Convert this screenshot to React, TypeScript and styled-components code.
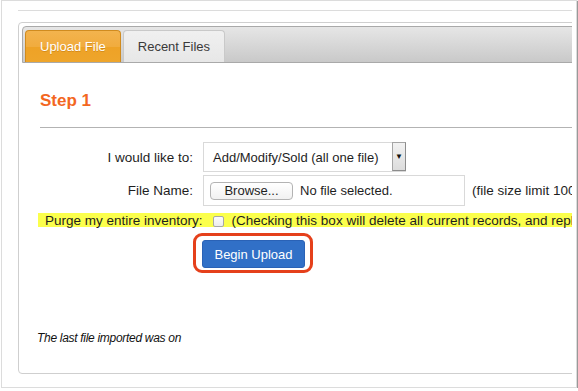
import React from 'react'
import styled, { createGlobalStyle } from 'styled-components'

const GlobalStyle = createGlobalStyle`
  html, body {
    margin: 0;
    padding: 0;
    background: #fff;
  }
  body {
    font-family: "Liberation Sans", Helvetica, Arial, sans-serif;
    color: #1e1e1e;
  }
`

const Frame = styled.div`
  box-sizing: border-box;
  margin-left: 1px;
  width: 576px;
  height: 388px;
  border: 1px solid #dcdcdc;
  box-shadow: 1px 1px 1px rgba(0, 0, 0, 0.4);
  background: #fff;
  padding: 9px 4px 0 16px;
`

const Clip = styled.div`
  height: 100%;
  overflow: hidden;
`

const TopRule = styled.div`
  border-top: 1px solid #dcdcdc;
`

const Panel = styled.div`
  box-sizing: border-box;
  margin-top: 11px;
  width: 760px;
  height: 352px;
  border: 1px solid #cfcfcf;
  border-radius: 4px;
  padding: 3px;
`

const TabBar = styled.div`
  box-sizing: border-box;
  height: 37px;
  display: flex;
  align-items: flex-end;
  gap: 2px;
  padding: 0 2px;
  border: 1px solid #a9a9a9;
  border-radius: 4px 4px 0 0;
  background: linear-gradient(#e6e6e6, #c9c9c9);
`

const Tab = styled.div<{ $active?: boolean }>`
  box-sizing: border-box;
  height: 32px;
  padding: 0 14px;
  display: flex;
  align-items: center;
  font-size: 13px;
  border-radius: 4px 4px 0 0;
  border: 1px solid ${p => (p.$active ? '#d08b1f' : '#c9c9c9')};
  border-bottom: none;
  color: ${p => (p.$active ? '#fff' : '#3a3a3a')};
  background: ${p =>
    p.$active
      ? 'linear-gradient(#f3b34e 0%, #f1ac3e 50%, #eea226 51%, #eea52b 100%)'
      : 'linear-gradient(#f0f0f0, #e7e7e7)'};
  text-shadow: ${p => (p.$active ? '0 1px 0 rgba(160, 90, 0, 0.35)' : 'none')};
`

const Content = styled.div`
  padding: 0 0 0 18px;
`

const Heading = styled.h2`
  margin: 28px 0 0;
  font-size: 17px;
  line-height: 20px;
  font-weight: bold;
  color: #f3671f;
`

const Rule = styled.div`
  margin-top: 16px;
  border-top: 1px solid #b3b3b3;
`

const Row = styled.div<{ $gap?: number }>`
  display: flex;
  align-items: center;
  margin-top: ${p => p.$gap ?? 0}px;
`

const Label = styled.label`
  width: 153px;
  text-align: right;
  font-size: 13.5px;
`

const FieldBox = styled.div<{ $w: number; $h: number }>`
  box-sizing: border-box;
  margin-left: 10px;
  width: ${p => p.$w}px;
  height: ${p => p.$h}px;
  border: 1px solid #d9d9d9;
  display: flex;
  align-items: center;
  font-size: 13px;
`

const SelectText = styled.span`
  flex: 1;
  padding-left: 9px;
`

const Arrow = styled.span`
  box-sizing: border-box;
  align-self: stretch;
  width: 14px;
  margin: -1px -1px 0 0;
  border: 1px solid #a5a5a5;
  border-right-color: #8c8c8c;
  border-bottom-color: #8c8c8c;
  background: linear-gradient(#f2f2f2, #dcdcdc);
  display: flex;
  align-items: center;
  justify-content: center;
  font-size: 8px;
  color: #111;
`

const BrowseButton = styled.span`
  box-sizing: border-box;
  margin-left: 6px;
  width: 83px;
  height: 18px;
  border: 1px solid #b3b3b3;
  border-radius: 4px;
  background: linear-gradient(#ffffff, #f1f1f1);
  display: flex;
  align-items: center;
  justify-content: center;
  font-size: 13px;
`

const FileStatus = styled.span`
  margin-left: 7px;
`

const Note = styled.span`
  margin-left: 7px;
  font-size: 13.5px;
  white-space: nowrap;
`

const Highlight = styled.div`
  margin: 7px 0 0 -2px;
  padding-left: 7px;
  height: 14px;
  display: flex;
  align-items: center;
  background: #fbff4c;
  font-size: 13.5px;
  white-space: nowrap;
`

const Check = styled.input`
  appearance: none;
  box-sizing: border-box;
  width: 11px;
  height: 11px;
  margin: 2px 8px 0 10px;
  border: 1px solid #a8a8a8;
  border-radius: 2px;
  background: linear-gradient(#fcfcfc, #ececec);
`

const ButtonRow = styled.div`
  margin-top: 6px;
  padding-left: 153px;
`

const Annotation = styled.div`
  display: inline-flex;
  border: 3px solid #e5401b;
  border-radius: 9px;
  padding: 4px 5px 2px 6px;
`

const UploadButton = styled.button`
  box-sizing: border-box;
  width: 103px;
  height: 28px;
  border: 1px solid #2a62b6;
  border-radius: 3px;
  background: #3170c7;
  color: #fff;
  font-family: inherit;
  font-size: 13px;
  padding: 0;
`

const LastImport = styled.p`
  margin: 58px 0 0 -3px;
  font-size: 12px;
  line-height: 14px;
  letter-spacing: -0.3px;
  font-style: italic;
  color: #111;
`

const App: React.FC = () => {
  return (
    <>
      <GlobalStyle />
      <Frame>
        <Clip>
          <TopRule />
          <Panel>
            <TabBar>
              <Tab $active>Upload File</Tab>
              <Tab>Recent Files</Tab>
            </TabBar>
            <Content>
              <Heading>Step 1</Heading>
              <Rule />
              <Row $gap={14}>
                <Label>I would like to:</Label>
                <FieldBox $w={203} $h={30}>
                  <SelectText>Add/Modify/Sold (all one file)</SelectText>
                  <Arrow>▼</Arrow>
                </FieldBox>
              </Row>
              <Row $gap={3}>
                <Label>File Name:</Label>
                <FieldBox $w={262} $h={31}>
                  <BrowseButton>Browse...</BrowseButton>
                  <FileStatus>No file selected.</FileStatus>
                </FieldBox>
                <Note>(file size limit 100 MB)</Note>
              </Row>
              <Highlight>
                Purge my entire inventory:
                <Check type="checkbox" />
                (Checking this box will delete all current records, and replace them with this file.)
              </Highlight>
              <ButtonRow>
                <Annotation>
                  <UploadButton>Begin Upload</UploadButton>
                </Annotation>
              </ButtonRow>
              <LastImport>The last file imported was on</LastImport>
            </Content>
          </Panel>
        </Clip>
      </Frame>
    </>
  )
}

export default App
